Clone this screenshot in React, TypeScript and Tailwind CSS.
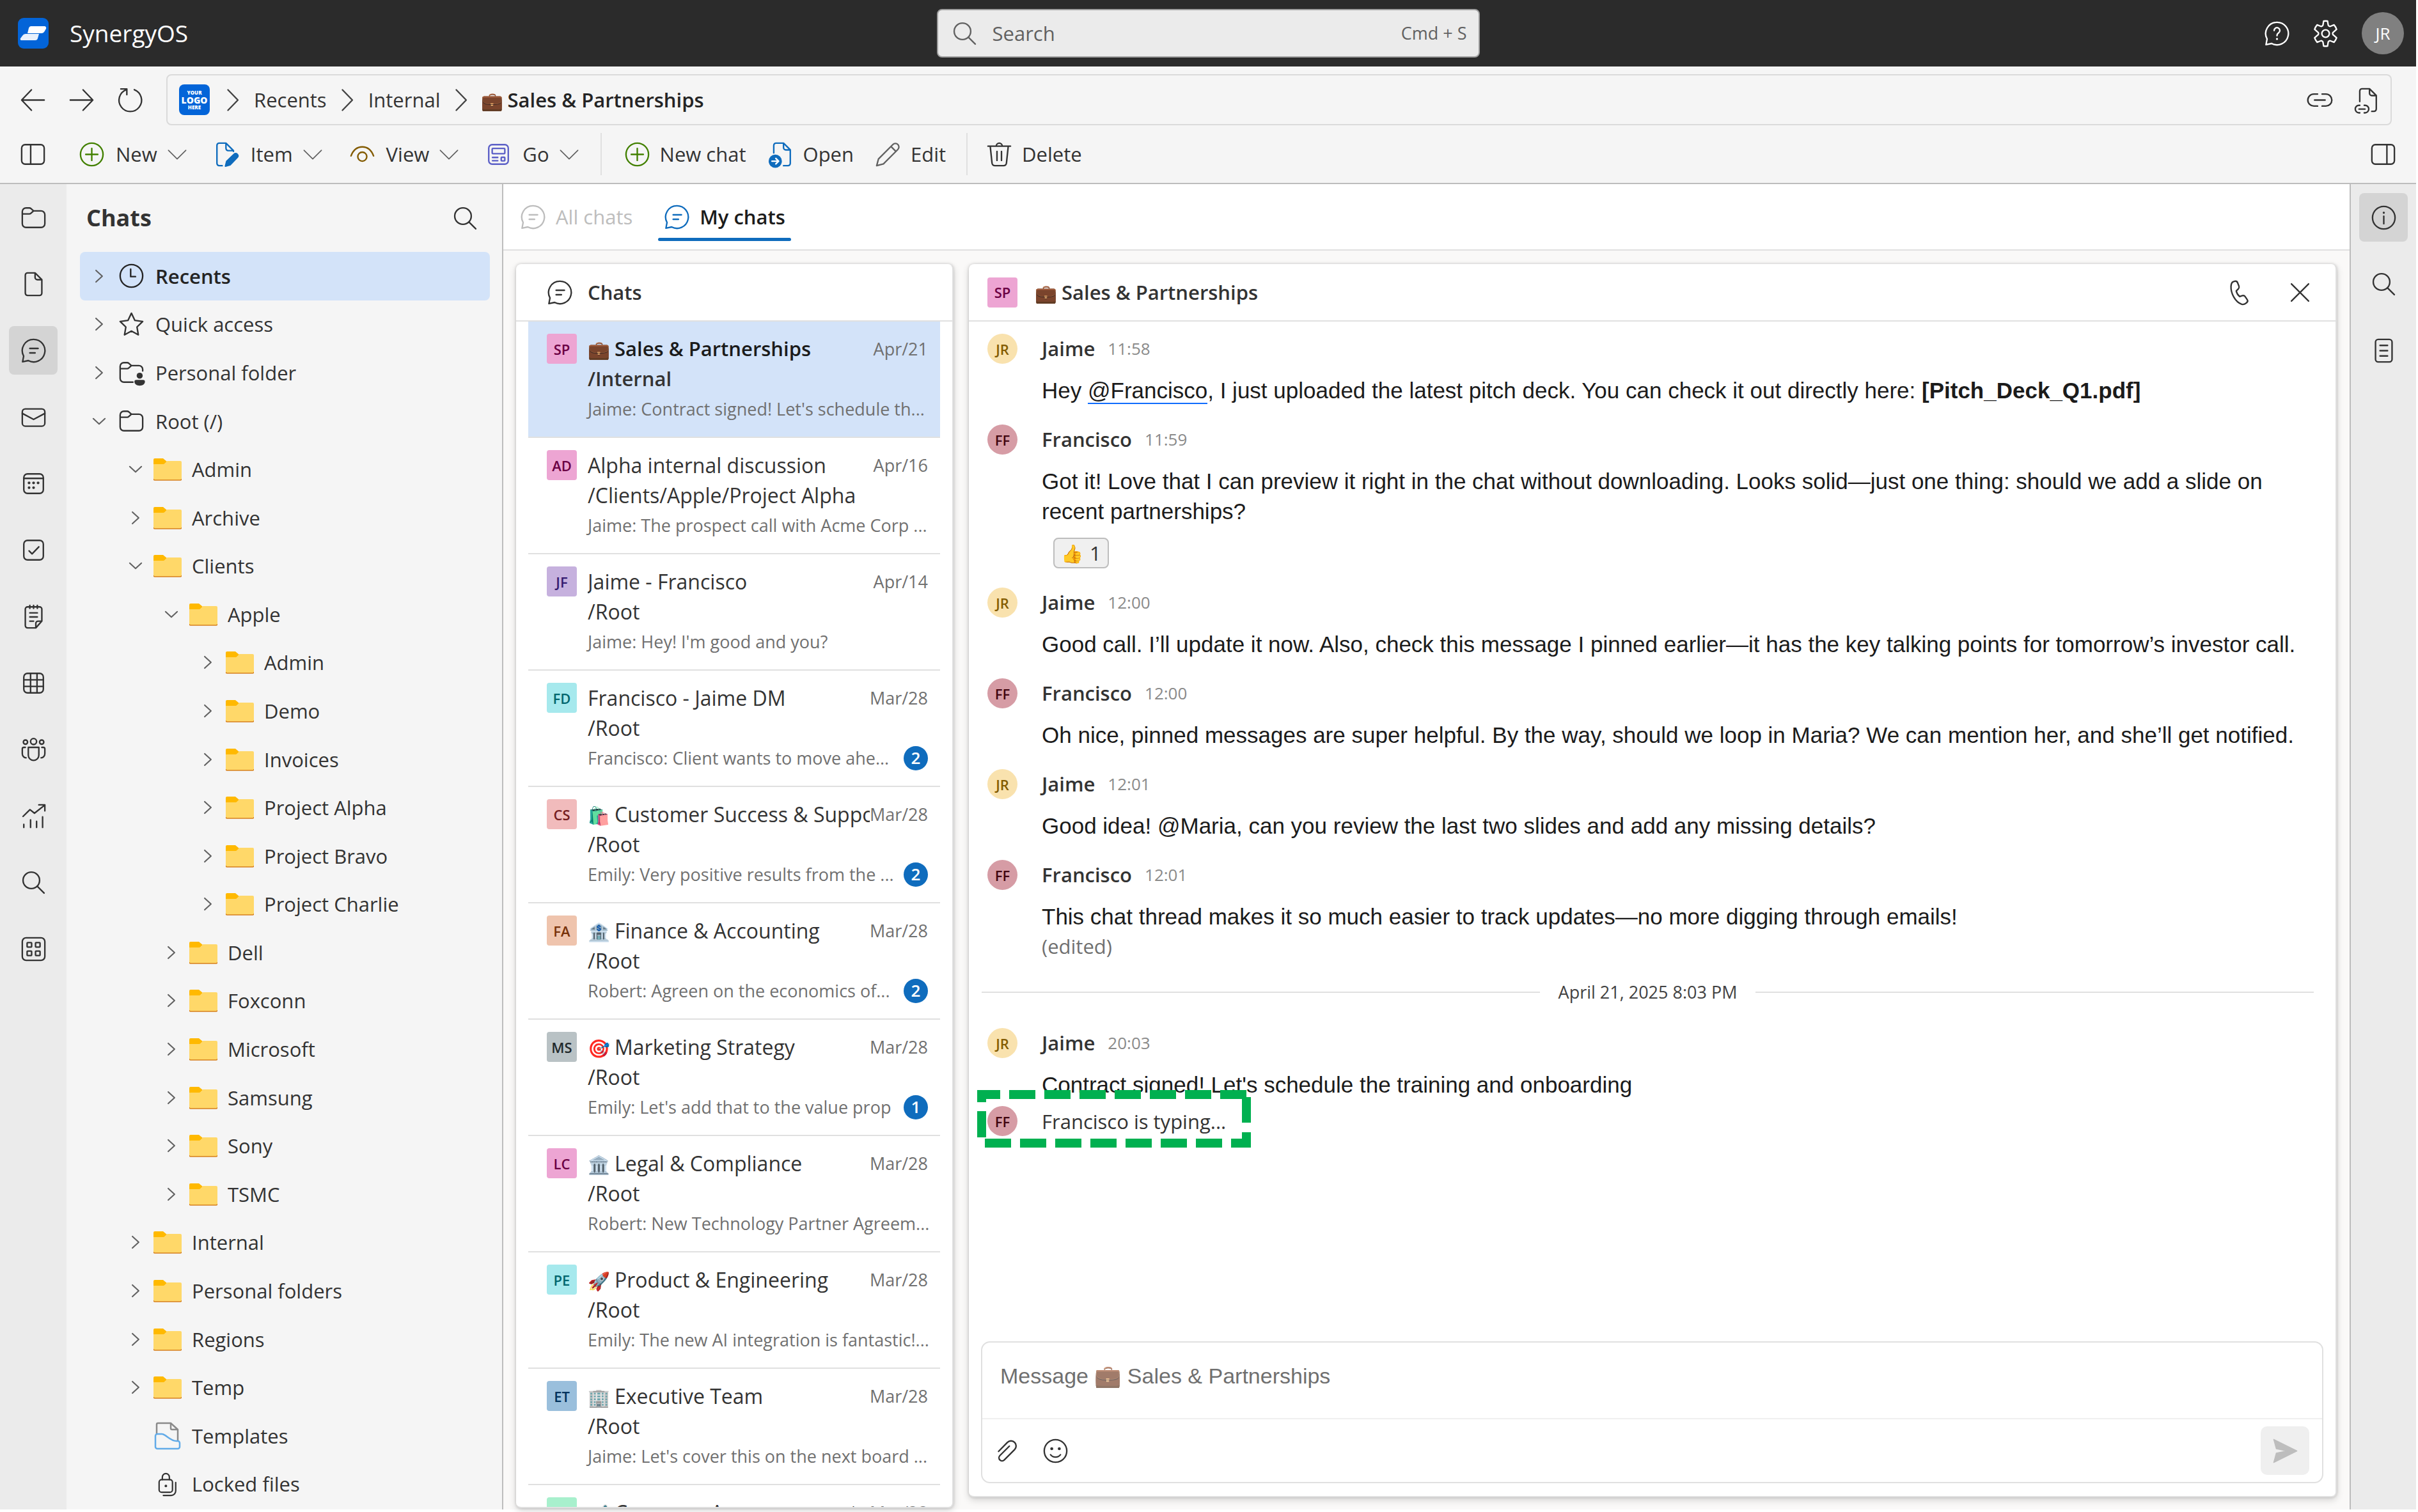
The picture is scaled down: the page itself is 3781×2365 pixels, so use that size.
import React from "react";

type Kids = { children?: React.ReactNode; className?: string };

function Ico({ children, className = "size-[47px]" }: Kids) {
  return (
    <svg
      viewBox="0 0 20 20"
      fill="none"
      stroke="currentColor"
      strokeWidth="1"
      strokeLinecap="round"
      strokeLinejoin="round"
      aria-hidden="true"
      className={`${className} shrink-0`}
    >
      {children}
    </svg>
  );
}

const dot = { fill: "currentColor", stroke: "none" };

const ArrowLeft = () => <Ico><path d="M17.5 10H2.7M9 3.2 2.5 10 9 16.8" /></Ico>;
const ArrowRight = () => <Ico><path d="M2.5 10h14.8M11 3.2 17.5 10 11 16.8" /></Ico>;
const Refresh = () => <Ico><path d="M12.8 3.1A7.5 7.5 0 1 1 7.400 3.1M3.800 2.600H7.800V6.400" /></Ico>;
const PanelLeft = () => <Ico><rect x="2.5" y="3.5" width="15" height="13" rx="2.3" /><path d="M8.5 3.5v13" /></Ico>;
const PanelRight = () => <Ico><rect x="2.5" y="3.5" width="15" height="13" rx="2.3" /><path d="M12.5 3.5v13" /></Ico>;
const AddCircle = () => <Ico className="size-[47px] text-[#428000]"><circle cx="10" cy="10" r="7.5" /><path d="M10 6v8M6 10h8" /></Ico>;
const ChevDown = () => <Ico className="size-[34px] text-[#616161]"><path d="M2 6.5l8 8 8-8" /></Ico>;
const ChevRight = () => <Ico className="size-[47px] text-[#424242]"><path d="M7 3.2 13.6 10 7 16.8" /></Ico>;
const ItemIcon = () => (
  <Ico className="size-[47px] text-[#0f6cbd]">
    <path d="M7 17.500H5A1.500 1.500 0 0 1 3.500 16V4A1.500 1.500 0 0 1 5 2.500h4.500l5 5v.5M9.500 2.500V6A1.500 1.500 0 0 0 11 7.500h3.500" />
    <path d="M9.200 17.800l.8-3.200 5-4.800a1.300 1.300 0 0 1 1.900 0l.2.200a1.300 1.300 0 0 1 0 1.900L12.200 17z" fill="currentColor" />
  </Ico>
);
const EyeIcon = () => <Ico className="size-[47px] text-[#835b00]"><path d="M2.500 11C4 7 6.700 5 10 5s6 2 7.500 6" /><circle cx="10" cy="11.500" r="3" /></Ico>;
const GoIcon = () => (
  <Ico className="size-[47px] text-[#5b5fc7]">
    <rect x="3.500" y="3.500" width="13" height="13" rx="2.300" />
    <rect x="5.800" y="6" width="8.400" height="3.500" rx="0.500" />
    <path d="M6 12h3.500M6 14.200h3.500" />
    <rect x="11.800" y="11.900" width="2.400" height="2.400" rx="0.400" />
  </Ico>
);
const OpenIcon = () => (
  <Ico className="size-[47px] text-[#0f6cbd]">
    <path d="M5.500 9V4A1.500 1.500 0 0 1 7 2.500h5l4.500 4.500v9A1.500 1.500 0 0 1 15 17.500h-3M12 2.500V5.500A1.500 1.500 0 0 0 13.500 7h3" />
    <circle cx="6.500" cy="14.500" r="4.400" {...dot} />
    <path d="M4.300 14.500h4.200M6.900 12.700l1.800 1.800-1.800 1.800" stroke="white" />
  </Ico>
);
const PencilIcon = () => <Ico className="size-[47px] text-[#616161]"><path d="M2.500 17.500l1.200-4.500L13.300 3.400a2.300 2.300 0 0 1 3.300 3.300L7 16.300zM12 4.700 15.300 8" /></Ico>;
const TrashIcon = () => <Ico><path d="M2.500 4.500h15M8 4.500a2 2 0 0 1 4 0M4 4.500l1.200 11.300a2 2 0 0 0 2 1.700h5.600a2 2 0 0 0 2-1.700L16 4.500M8.500 8v6M11.500 8v6" /></Ico>;
const LinkIcon = () => <Ico><path d="M8.500 6H6a4 4 0 0 0 0 8h2.500M11.500 6H14a4 4 0 0 1 0 8h-2.500M6.500 10h7" /></Ico>;
const DocLink = () => (
  <Ico>
    <path d="M5.500 11V4A1.500 1.500 0 0 1 7 2.500h5l4.500 4.500v9A1.500 1.500 0 0 1 15 17.500h-1.500M12 2.500V5.500A1.500 1.500 0 0 0 13.500 7h3" />
    <path d="M5.500 13.500H5a2.500 2.500 0 0 0 0 5h.5M8.500 13.500H9a2.500 2.500 0 0 1 0 5h-.5M5 16h4" />
  </Ico>
);
const SearchIcon = () => <Ico><circle cx="8.500" cy="8.500" r="5.500" /><path d="M12.500 12.500l4.500 4.500" /></Ico>;
const HelpIcon = () => (
  <Ico>
    <path d="M10 2.500a7.500 7.500 0 1 1-3.500 14.100L2.700 17.400 3.400 13.600A7.500 7.500 0 0 1 10 2.500z" />
    <path d="M8.100 8a1.900 1.900 0 1 1 3 1.500c-.7.500-1.100 1-1.100 1.900" />
    <circle cx="10" cy="13.600" r="0.700" {...dot} />
  </Ico>
);
const GearIcon = () => (
  <Ico>
    <path d="M8.700 1.200a8 8 0 0 1 2.600 0l.4 2.400a1.200 1.200 0 0 0 1.700 1l2.200-.9a8.500 8.500 0 0 1 1.700 3l-1.900 1.700a1.200 1.200 0 0 0 0 2.200l1.900 1.700a8.500 8.500 0 0 1-1.700 3l-2.200-.9a1.200 1.200 0 0 0-1.700 1l-.4 2.400a8 8 0 0 1-2.600 0l-.4-2.400a1.200 1.200 0 0 0-1.700-1l-2.200.9a8.500 8.500 0 0 1-1.700-3l1.900-1.700a1.200 1.200 0 0 0 0-2.200L2.700 6.700a8.500 8.500 0 0 1 1.700-3l2.200.9a1.200 1.200 0 0 0 1.700-1z" transform="translate(0 .5)" />
    <circle cx="10" cy="10" r="2.500" />
  </Ico>
);
const ChatIcon = () => <Ico><path d="M10 2.500a7.500 7.500 0 1 1-3.500 14.100L2.700 17.400 3.400 13.600A7.500 7.500 0 0 1 10 2.500zM7.500 8.500h5.500M7.500 11.500h3.500" /></Ico>;
const FolderIcon = () => <Ico><path d="M2.500 6A2.500 2.500 0 0 1 5 3.500h2.200a1.500 1.500 0 0 1 1 .4l1.800 1.600h5A2.500 2.500 0 0 1 17.500 8v6a2.500 2.500 0 0 1-2.500 2.500H5A2.500 2.500 0 0 1 2.500 14zM2.500 7.500h4.700a1.500 1.500 0 0 0 1-.4L10 5.500" /></Ico>;
const PersonFolder = () => (
  <Ico>
    <path d="M11 16.500H5A2.500 2.500 0 0 1 2.500 14V6A2.500 2.500 0 0 1 5 3.500h2.200a1.500 1.500 0 0 1 1 .4l1.800 1.600h5A2.500 2.500 0 0 1 17.500 8v1M2.500 7.500h4.700a1.500 1.500 0 0 0 1-.4L10 5.500" />
    <circle cx="15.500" cy="12.200" r="2" {...dot} />
    <path d="M12 16.200a1.200 1.200 0 0 1 1.200-1.200h4.600a1.200 1.200 0 0 1 1.200 1.200c0 1.600-1.500 2.600-3.500 2.600s-3.500-1-3.500-2.600z" {...dot} />
  </Ico>
);
const DocIcon = () => <Ico><path d="M4.500 4A1.500 1.500 0 0 1 6 2.500h5L15.500 7v9A1.500 1.500 0 0 1 14 17.500H6A1.500 1.500 0 0 1 4.500 16zM11 2.500V5.500A1.500 1.500 0 0 0 12.500 7h3" /></Ico>;
const MailIcon = () => <Ico><rect x="2.500" y="4.500" width="15" height="11.500" rx="2" /><path d="M2.500 7.500 10 11.500l7.500-4" /></Ico>;
const CalendarIcon = () => (
  <Ico>
    <rect x="3.500" y="3.500" width="13" height="13" rx="2.500" />
    <path d="M3.500 6.500h13" />
    {[[7, 9.500], [10, 9.500], [13, 9.500], [7, 12.700], [10, 12.700]].map(([x, y]) => <circle key={`${x}-${y}`} cx={x} cy={y} r="0.900" {...dot} />)}
  </Ico>
);
const TaskIcon = () => <Ico><rect x="3.500" y="3.500" width="13" height="13" rx="2.500" /><path d="M7 10.500l2 2 4.500-4.700" /></Ico>;
const NoteIcon = () => <Ico><path d="M4.500 5A1.500 1.500 0 0 1 6 3.500h8A1.500 1.500 0 0 1 15.500 5v8L11.500 17.500H6A1.500 1.500 0 0 1 4.500 16zM15.500 13H13a1.500 1.500 0 0 0-1.500 1.500v3M7.500 2.500v2M10 2.500v2M12.500 2.500v2M7.500 7.500h5M7.500 10.200h5M7.500 13h2.500" /></Ico>;
const GridIcon = () => <Ico><rect x="3.500" y="3.500" width="13" height="13" rx="2.500" /><path d="M8 3.500v13M12.300 3.500v13M3.500 7.800h13M3.500 12.200h13" /></Ico>;
const PeopleIcon = () => <Ico><circle cx="10" cy="4.600" r="2" /><circle cx="4.600" cy="5" r="1.400" /><circle cx="15.400" cy="5" r="1.400" /><path d="M6.500 8.500h7v5.200a3.500 3.500 0 0 1-7 0zM4.500 8.500h-1a1 1 0 0 0-1 1v3.300A2.700 2.700 0 0 0 5 15.500M15.500 8.500h1a1 1 0 0 1 1 1v3.300A2.700 2.700 0 0 1 15 15.500" /></Ico>;
const ChartIcon = () => <Ico><path d="M3 10.200 7.600 5.700l3 2.400L17 3M13.500 2.500h4v4M3.500 15.500v2M8 12.500v5M12 13.500v4M16 10.500v7" /></Ico>;
const AppsIcon = () => (
  <Ico>
    <rect x="2.500" y="2.500" width="15" height="15" rx="2.500" />
    {[[5.700, 5.700], [11.300, 5.700], [5.700, 11.300], [11.300, 11.300]].map(([x, y]) => <rect key={`${x}-${y}`} x={x} y={y} width="3" height="3" rx="0.400" />)}
  </Ico>
);
const InfoIcon = () => <Ico><circle cx="10" cy="10" r="7.500" /><path d="M10 9v5" /><circle cx="10" cy="6.700" r="0.700" {...dot} /></Ico>;
const DocLines = () => <Ico><rect x="4.500" y="2.500" width="11" height="15" rx="1.800" /><path d="M7.500 6.500h5M7.500 10h5M7.500 13.500h5" /></Ico>;
const PhoneIcon = () => <Ico><path d="M5.800 2.900 7 2.500c.9-.2 1.600.2 1.900 1l.9 2.300c.2.700 0 1.400-.4 1.800L8 9c.3 1.400 1.100 2.700 2.300 3.700l1.800-.6c.7-.2 1.400 0 1.800.6l1.300 1.900c.5.700.4 1.600-.2 2.100l-.6.500c-.8.700-1.800.9-2.800.6-4.300-1.400-7.300-7.300-7.100-11.900.1-1.300.4-2.600 1.300-3z" /></Ico>;
const CloseIcon = () => <Ico><path d="M4.300 4.300l11.400 11.400M15.700 4.300 4.300 15.700" /></Ico>;
const ClockIcon = () => <Ico><circle cx="10" cy="10" r="7.500" /><path d="M9.500 5.500v5h3.200" /></Ico>;
const StarIcon = () => <Ico><path d="M10 2.500l2.300 4.800 5.200.7-3.800 3.700.9 5.200L10 14.400l-4.600 2.500.9-5.200L2.500 8l5.200-.7z" /></Ico>;
const Paperclip = () => <Ico><path d="M3 10.300 8.900 4.300a3.300 3.300 0 0 1 4.800 4.800l-6.900 6.900a2 2 0 0 1-2.900-2.900l6.300-6.300" transform="translate(1 0)" /></Ico>;
const SmileyIcon = () => <Ico><circle cx="10" cy="10" r="7.500" /><path d="M6.700 12.500a4.200 4.200 0 0 0 6.600 0" /><circle cx="7.500" cy="8.500" r="1" {...dot} /><circle cx="12.500" cy="8.500" r="1" {...dot} /></Ico>;
const SendIcon = () => <Ico className="size-[47px] text-[#bdbdbd]"><path d="M2.300 2.300 17.700 10 2.300 17.700 4 11.500 11 10 4 8.500z" fill="currentColor" strokeWidth="0.600" /></Ico>;

function YellowFolder() {
  return (
    <svg viewBox="0 0 44 36" aria-hidden="true" className="h-[36px] w-[44px] shrink-0">
      <path d="M0 3a2 2 0 0 1 2-2h13l6 5-5 5H0z" fill="#ffb900" />
      <path d="M0 10h14c2 0 3-.6 4-1.600l3.400-3.400H42a2 2 0 0 1 2 2v26a2 2 0 0 1-2 2H2a2 2 0 0 1-2-2z" fill="#ffd869" />
      <path d="M0 33a2 2 0 0 0 2 2h40a2 2 0 0 0 2-2" fill="none" stroke="#d67f1c" strokeWidth="1.500" />
    </svg>
  );
}
function TemplateIcon() {
  return (
    <svg viewBox="0 0 44 44" fill="none" strokeWidth="2.500" strokeLinejoin="round" aria-hidden="true" className="size-[44px] shrink-0">
      <path d="M5 20V4a2 2 0 0 1 2-2h20l11 10v18M27 2v8a2 2 0 0 0 2 2h9" stroke="#8a8a8a" />
      <path d="M3 22a3 3 0 0 1 3-3h7c6 0 13 11 23 11h2a3 3 0 0 1 3 3v6a3 3 0 0 1-3 3H6a3 3 0 0 1-3-3z" stroke="#62abe8" />
    </svg>
  );
}
const LockIcon = () => <Ico className="size-[44px]"><rect x="4" y="7" width="9.500" height="9" rx="1.800" /><path d="M6.300 7V5.200a2.500 2.500 0 0 1 5 0V7M15.800 9v6a3.200 3.200 0 0 1-3.200 3.200H7" /><circle cx="8.800" cy="11.500" r="0.900" {...dot} /></Ico>;

type Node = { label: string; level: number; open?: boolean; leaf?: boolean; icon?: () => React.JSX.Element; active?: boolean };

const tree: Node[] = [
  { label: "Recents", level: 0, icon: ClockIcon, active: true },
  { label: "Quick access", level: 0, icon: StarIcon },
  { label: "Personal folder", level: 0, icon: PersonFolder },
  { label: "Root (/)", level: 0, icon: FolderIcon, open: true },
  { label: "Admin", level: 1, open: true },
  { label: "Archive", level: 1 },
  { label: "Clients", level: 1, open: true },
  { label: "Apple", level: 2, open: true },
  { label: "Admin", level: 3 },
  { label: "Demo", level: 3 },
  { label: "Invoices", level: 3 },
  { label: "Project Alpha", level: 3 },
  { label: "Project Bravo", level: 3 },
  { label: "Project Charlie", level: 3 },
  { label: "Dell", level: 2 },
  { label: "Foxconn", level: 2 },
  { label: "Microsoft", level: 2 },
  { label: "Samsung", level: 2 },
  { label: "Sony", level: 2 },
  { label: "TSMC", level: 2 },
  { label: "Internal", level: 1 },
  { label: "Personal folders", level: 1 },
  { label: "Regions", level: 1 },
  { label: "Temp", level: 1 },
  { label: "Templates", level: 1, leaf: true, icon: TemplateIcon },
  { label: "Locked files", level: 1, leaf: true, icon: LockIcon },
];

const indents = ["pl-[16px]", "pl-[73px]", "pl-[129px]", "pl-[186px]"];

function TreeRow({ node }: { node: Node }) {
  const Icon = node.icon ?? YellowFolder;
  return (
    <li className="flex min-h-0 flex-1">
      <button
        className={`flex w-full items-center rounded-[8px] text-left ${indents[node.level]} ${node.active ? "bg-[#d3e3f9] font-semibold text-[#242424]" : ""}`}
      >
        <span className="flex w-[28px] justify-center text-[#616161]">
          {!node.leaf && (
            <Ico className="size-[28px]">
              <path strokeWidth="1.500" d={node.open ? "M3.500 7l6.500 6 6.500-6" : "M6.500 3.500 13.500 10l-7 6.500"} />
            </Ico>
          )}
        </span>
        <span className="ml-[12px] flex w-[48px] justify-center">
          <Icon />
        </span>
        <span className="ml-[14px] truncate">{node.label}</span>
      </button>
    </li>
  );
}

type Chat = { code: string; tone: string; emoji?: string; title: string; path: string; text: string; date: string; unread?: number; active?: boolean };

const pink = "bg-[#eda5d3] text-[#6b0043]";
const cyan = "bg-[#a6e9ed] text-[#00666d]";
const chats: Chat[] = [
  { code: "SP", tone: pink, emoji: "💼", title: "Sales & Partnerships", path: "/Internal", text: "Jaime: Contract signed! Let's schedule th...", date: "Apr/21", active: true },
  { code: "AD", tone: pink, title: "Alpha internal discussion", path: "/Clients/Apple/Project Alpha", text: "Jaime: The prospect call with Acme Corp ...", date: "Apr/16" },
  { code: "JF", tone: "bg-[#c6b1de] text-[#341a6f]", title: "Jaime - Francisco", path: "/Root", text: "Jaime: Hey! I'm good and you?", date: "Apr/14" },
  { code: "FD", tone: cyan, title: "Francisco - Jaime DM", path: "/Root", text: "Francisco: Client wants to move ahe...", date: "Mar/28", unread: 2 },
  { code: "CS", tone: "bg-[#f1bbbc] text-[#751d1f]", emoji: "🛍️", title: "Customer Success & Support", path: "/Root", text: "Emily: Very positive results from the ...", date: "Mar/28", unread: 2 },
  { code: "FA", tone: "bg-[#efc4ad] text-[#77320a]", emoji: "🏦", title: "Finance & Accounting", path: "/Root", text: "Robert: Agreen on the economics of...", date: "Mar/28", unread: 2 },
  { code: "MS", tone: "bg-[#b9c2c5] text-[#22292c]", emoji: "🎯", title: "Marketing Strategy", path: "/Root", text: "Emily: Let's add that to the value prop", date: "Mar/28", unread: 1 },
  { code: "LC", tone: pink, emoji: "🏛️", title: "Legal & Compliance", path: "/Root", text: "Robert: New Technology Partner Agreem...", date: "Mar/28" },
  { code: "PE", tone: cyan, emoji: "🚀", title: "Product & Engineering", path: "/Root", text: "Emily: The new AI integration is fantastic!...", date: "Mar/28" },
  { code: "ET", tone: "bg-[#9abfdc] text-[#00325c]", emoji: "🏢", title: "Executive Team", path: "/Root", text: "Jaime: Let's cover this on the next board ...", date: "Mar/28" },
  { code: "CA", tone: "bg-[#a8f0cd] text-[#0f5132]", emoji: "📢", title: "Company Announcements", path: "/Root", text: "", date: "Mar/28" },
];

function Emoji({ children }: Kids) {
  return <span className="mr-[8px] inline-block w-[34px] text-[28px] leading-none">{children}</span>;
}

function ChatRow({ chat }: { chat: Chat }) {
  return (
    <li className="h-[182px] shrink-0 border-b-2 border-[#e0e0e0]">
      <button className={`flex size-full items-start gap-[17px] pt-[19px] pr-[19px] pl-[29px] text-left ${chat.active ? "bg-[#d3e3f9]" : ""}`}>
        <span className={`flex size-[47px] shrink-0 items-center justify-center rounded-[4px] text-[22px] font-semibold ${chat.tone}`}>{chat.code}</span>
        <span className={`flex min-w-0 flex-1 flex-col leading-[47px] ${chat.active ? "text-[31px]" : "text-[32px]"}`}>
          <span className="flex">
            <span className={`min-w-0 flex-1 overflow-hidden whitespace-nowrap ${chat.active ? "font-semibold text-[#1b1b1b]" : ""}`}>
              {chat.emoji && <Emoji>{chat.emoji}</Emoji>}
              {chat.title}
            </span>
            <span className="text-[27px] text-[#707070]">{chat.date}</span>
          </span>
          <span className={chat.active ? "font-semibold" : ""}>{chat.path}</span>
          <span className="flex items-center text-[27px] text-[#707070]">
            <span className="min-w-0 flex-1 whitespace-nowrap">{chat.text}</span>
            {chat.unread && (
              <span className="flex size-[38px] items-center justify-center rounded-full bg-[#0f6cbd] text-[26px] font-semibold text-white">{chat.unread}</span>
            )}
          </span>
        </span>
      </button>
    </li>
  );
}

const people = {
  Jaime: { code: "JR", tone: "bg-[#f9e2ae] text-[#835b00]" },
  Francisco: { code: "FF", tone: "bg-[#d69ca5] text-[#420610]" },
};

function Avatar({ name }: { name: keyof typeof people }) {
  const p = people[name];
  return <span className={`flex size-[47px] shrink-0 items-center justify-center rounded-full text-[22px] font-semibold ${p.tone}`}>{p.code}</span>;
}

function Message({ name, time, children, extra }: { name: keyof typeof people; time: string; children: React.ReactNode; extra?: React.ReactNode }) {
  return (
    <article className="flex gap-[38px]">
      <Avatar name={name} />
      <div className="min-w-0 flex-1">
        <header className="flex items-center gap-[20px] leading-[47px]">
          <span className="font-semibold">{name}</span>
          <time className="text-[26px] text-[#8a8a8a]">{time}</time>
        </header>
        <p className="mt-[18px] font-['Liberation_Sans',sans-serif] text-[35px] leading-[47px] text-[#1b1b1b]">{children}</p>
        {extra}
      </div>
    </article>
  );
}

function ToolButton({ icon, label, menu }: { icon: React.ReactNode; label: string; menu?: boolean }) {
  return (
    <button className={`flex items-center ${menu ? "gap-[14px]" : "gap-[12px]"}`}>
      {icon}
      <span>{label}</span>
      {menu && <ChevDown />}
    </button>
  );
}

function RailButton({ label, active, children }: Kids & { label: string; active?: boolean }) {
  return (
    <button aria-label={label} className={`flex size-[76px] items-center justify-center rounded-[8px] ${active ? "bg-[#d4d4d4]" : ""}`}>
      {children}
    </button>
  );
}

const rail: [string, () => React.JSX.Element][] = [
  ["Folders", FolderIcon],
  ["Files", DocIcon],
  ["Chats", ChatIcon],
  ["Mail", MailIcon],
  ["Calendar", CalendarIcon],
  ["Tasks", TaskIcon],
  ["Notes", NoteIcon],
  ["Tables", GridIcon],
  ["Contacts", PeopleIcon],
  ["Reports", ChartIcon],
  ["Search", SearchIcon],
  ["Apps", AppsIcon],
];

function Highlight() {
  return (
    <svg viewBox="0 0 428 90" fill="none" stroke="#00b050" strokeWidth="14" aria-hidden="true" className="absolute -top-[25px] -left-[16px] h-[90px] w-[428px]">
      <path d="M7 19V7H36M380 7H421M421 11V51M421 66V83H397M7 74V33" />
      <path d="M50 7H366" strokeDasharray="41 14" />
      <path d="M12 83H383" strokeDasharray="41 14" />
    </svg>
  );
}

const panel = "flex flex-col overflow-hidden rounded-[8px] border-r-2 border-b-2 border-[#e0e0e0] bg-white shadow-[0_4px_12px_rgba(0,0,0,0.16),0_0_4px_rgba(0,0,0,0.18)]";

export default function App() {
  return (
    <div className="flex h-screen flex-col overflow-hidden bg-white pr-[3px] pb-[4px] font-['Open_Sans',sans-serif] text-[31px] leading-[44px] text-[#333333]">
      <header className="grid h-[104px] shrink-0 grid-cols-[1fr_auto_1fr] items-center bg-[#2b2b2b] text-white">
        <div className="flex items-center gap-[33px] pl-[28px]">
          <svg viewBox="0 0 48 48" aria-hidden="true" className="size-[48px]">
            <rect width="48" height="48" rx="9" fill="#0364d8" />
            <path d="M20 13h22a3 3 0 0 1 2 4l-3 5a5 5 0 0 1-4 2H15l2-8a4 4 0 0 1 3-3z" fill="#fff" />
            <path d="M12 25h21l-2 7a4 4 0 0 1-4 3H6a2 2 0 0 1-2-3l3-4a6 6 0 0 1 5-3z" fill="#e8f1fc" />
          </svg>
          <span className="text-[37px]">SynergyOS</span>
        </div>
        <label className="flex h-[76px] w-[849px] items-center gap-[20px] rounded-[8px] border-2 border-[#a0a0a0] bg-[#ebebeb] px-[18px] text-[#616161]">
          <SearchIcon />
          <input aria-label="Search" placeholder="Search" className="min-w-0 flex-1 bg-transparent outline-none placeholder:text-[#616161]" />
          <kbd className="font-['Open_Sans',sans-serif] text-[27px]">Cmd + S</kbd>
        </label>
        <div className="flex items-center justify-end gap-[29px] pr-[19px]">
          <button aria-label="Help"><HelpIcon /></button>
          <button aria-label="Settings"><GearIcon /></button>
          <button className="ml-[4px] flex size-[66px] items-center justify-center rounded-full bg-[#808080] text-[26px]">JR</button>
        </div>
      </header>

      <nav aria-label="Address" className="flex h-[104px] shrink-0 items-center gap-[29px] bg-[#f5f5f5] pr-[38px] pl-[28px] text-[#333333]">
        <button aria-label="Back"><ArrowLeft /></button>
        <button aria-label="Forward"><ArrowRight /></button>
        <button aria-label="Refresh"><Refresh /></button>
        <div className="ml-[4px] flex h-[80px] flex-1 items-center rounded-[8px] border-2 border-[#dadada] pr-[14px] pl-[18px]">
          <span className="mr-[12px] flex size-[48px] flex-col items-center justify-center rounded-[8px] bg-[#0364d8] text-[8px] leading-[10px] font-extrabold text-white">
            <span>YOUR</span>
            <span className="text-[14px] leading-[13px]">LOGO</span>
            <span>HERE</span>
          </span>
          <ChevRight />
          <a href="#recents" className="mr-[8px] ml-[10px]">Recents</a>
          <ChevRight />
          <a href="#internal" className="mr-[8px] ml-[10px]">Internal</a>
          <ChevRight />
          <a href="#sales" className="ml-[8px] font-semibold text-[#242424]"><Emoji>💼</Emoji>Sales &amp; Partnerships</a>
          <span className="flex-1" />
          <button aria-label="Copy link" className="mr-[26px]"><LinkIcon /></button>
          <button aria-label="Copy file link"><DocLink /></button>
        </div>
      </nav>

      <div role="toolbar" className="flex h-[80px] shrink-0 items-center gap-[32px] border-b-2 border-[#bdbdbd] bg-[#f5f5f5] px-[28px] pb-[12px]">
        <div className="flex items-center gap-[37px]">
          <button aria-label="Toggle left panel" className="mr-[8px]"><PanelLeft /></button>
          <ToolButton icon={<AddCircle />} label="New" menu />
          <ToolButton icon={<ItemIcon />} label="Item" menu />
          <ToolButton icon={<EyeIcon />} label="View" menu />
          <ToolButton icon={<GoIcon />} label="Go" menu />
        </div>
        <span className="h-[66px] w-[2px] bg-[#e0e0e0]" />
        <div className="flex items-center gap-[30px]">
          <ToolButton icon={<AddCircle />} label="New chat" />
          <ToolButton icon={<OpenIcon />} label="Open" />
          <ToolButton icon={<PencilIcon />} label="Edit" />
        </div>
        <span className="h-[66px] w-[2px] bg-[#e0e0e0]" />
        <div className="-ml-[6px] flex items-center">
          <ToolButton icon={<TrashIcon />} label="Delete" />
        </div>
        <span className="flex-1" />
        <button aria-label="Toggle right panel"><PanelRight /></button>
      </div>

      <div className="flex min-h-0 flex-1">
        <nav aria-label="Apps" className="flex w-[104px] shrink-0 flex-col items-center gap-[28px] bg-[#ebebeb] pt-[14px]">
          {rail.map(([label, Icon]) => (
            <RailButton key={label} label={label} active={label === "Chats"}><Icon /></RailButton>
          ))}
        </nav>

        <aside className="flex w-[683px] shrink-0 flex-col border-r-2 border-[#bdbdbd] bg-[#f5f5f5] pr-[19px] pb-[2px] pl-[21px]">
          <div className="flex h-[106px] shrink-0 items-center justify-between pr-[15px] pl-[10px]">
            <h2 className="text-[36px] font-bold">Chats</h2>
            <button aria-label="Search folders"><SearchIcon /></button>
          </div>
          <ul className="flex min-h-0 flex-1 flex-col">
            {tree.map((node, i) => <TreeRow key={i} node={node} />)}
          </ul>
        </aside>

        <main className="flex min-w-0 flex-1 flex-col bg-[#faf9f8]">
          <div role="tablist" className="flex h-[104px] shrink-0 items-center gap-[40px] border-b-2 border-[#e0e0e0] bg-white px-[23px]">
            <button role="tab" aria-selected="false" className="flex items-center gap-[12px] text-[#bdbdbd]"><ChatIcon />All chats</button>
            <button role="tab" aria-selected="true" className="mt-[14px] flex flex-col px-[6px] text-[#1b1b1b]">
              <span className="flex items-center gap-[12px] pr-[3px] pb-[9px] font-semibold"><span className="text-[#0f6cbd]"><ChatIcon /></span>My chats</span>
              <span className="-mx-[6px] h-[5px] self-stretch rounded-full bg-[#0f6cbd]" />
            </button>
          </div>
          <div className="flex min-h-0 flex-1 gap-[24px] px-[20px] pt-[21px]">
            <section className={`mb-[2px] w-[684px] shrink-0 ${panel}`}>
              <h3 className="flex h-[90px] shrink-0 items-center gap-[20px] border-b-2 border-[#e0e0e0] pl-[45px] font-semibold"><ChatIcon />Chats</h3>
              <ul className="mx-[19px] flex min-h-0 flex-1 flex-col overflow-hidden">
                {chats.map((c) => <ChatRow key={c.code} chat={c} />)}
              </ul>
            </section>

            <section className={`mb-[19px] min-w-0 flex-1 ${panel}`}>
              <header className="flex h-[90px] shrink-0 items-center border-b-2 border-[#e0e0e0] pr-[32px] pl-[29px]">
                <span className={`mr-[27px] flex size-[47px] items-center justify-center rounded-[4px] text-[22px] font-semibold ${pink}`}>SP</span>
                <h3 className="flex-1 font-semibold"><Emoji>💼</Emoji>Sales &amp; Partnerships</h3>
                <button aria-label="Call" className="mr-[48px]"><PhoneIcon /></button>
                <button aria-label="Close"><CloseIcon /></button>
              </header>

              <div className="flex min-h-0 flex-1 flex-col gap-[30px] overflow-hidden pt-[19px] pr-[34px] pl-[29px]">
                <Message name="Jaime" time="11:58">
                  Hey <a href="#francisco" className="border-b-2 border-[#0f6cfd] leading-none">@Francisco</a>, I just uploaded the latest pitch deck. You can check it out directly here: <b>[Pitch_Deck_Q1.pdf]</b>
                </Message>
                <Message
                  name="Francisco"
                  time="11:59"
                  extra={
                    <button className="mt-[18px] ml-[18px] flex h-[48px] items-center gap-[10px] rounded-[8px] border-2 border-[#bdbdbd] bg-[#f0f0f0] px-[10px]">
                      <span className="text-[28px] leading-none">👍</span>1
                    </button>
                  }
                >
                  Got it! Love that I can preview it right in the chat without downloading. Looks solid—just one thing: should we add a slide on recent partnerships?
                </Message>
                <Message name="Jaime" time="12:00">Good call. I’ll update it now. Also, check this message I pinned earlier—it has the key talking points for tomorrow’s investor call.</Message>
                <Message name="Francisco" time="12:00">Oh nice, pinned messages are super helpful. By the way, should we loop in Maria? We can mention her, and she’ll get notified.</Message>
                <Message name="Jaime" time="12:01">Good idea! @Maria, can you review the last two slides and add any missing details?</Message>
                <Message name="Francisco" time="12:01" extra={<p className="leading-[47px] text-[#707070]">(edited)</p>}>
                  This chat thread makes it so much easier to track updates—no more digging through emails!
                </Message>
                <div className="-ml-[9px] mb-[8px] flex items-center gap-[29px] text-[27px] leading-[36px] text-[#424242]">
                  <span className="h-[2px] flex-1 bg-[#e0e0e0]" />
                  April 21, 2025 8:03 PM
                  <span className="h-[2px] flex-1 bg-[#e0e0e0]" />
                </div>
                <Message name="Jaime" time="20:03">Contract signed! Let&apos;s schedule the training and onboarding</Message>
                <div className="relative -mt-[20px] flex items-center gap-[38px]">
                  <Avatar name="Francisco" />
                  <span>Francisco is typing...</span>
                  <Highlight />
                </div>
              </div>

              <form className="mx-[19px] mb-[20px] flex h-[222px] shrink-0 flex-col rounded-[14px] border-2 border-[#e0e0e0]">
                <textarea
                  aria-label="Message"
                  placeholder="Message 💼 Sales & Partnerships"
                  className="min-h-0 flex-1 resize-none px-[28px] py-[29px] font-['Liberation_Sans',sans-serif] text-[34px] leading-[47px] outline-none placeholder:text-[#333333] placeholder:opacity-70"
                />
                <div className="flex h-[100px] items-center border-t-2 border-[#f0f0f0] pr-[20px] pl-[16px]">
                  <button type="button" aria-label="Attach file" className="mr-[28px]"><Paperclip /></button>
                  <button type="button" aria-label="Insert emoji"><SmileyIcon /></button>
                  <span className="flex-1" />
                  <button aria-label="Send" className="flex size-[76px] items-center justify-center rounded-[10px] bg-[#efefef]"><SendIcon /></button>
                </div>
              </form>
            </section>
          </div>
        </main>

        <nav aria-label="Details" className="flex w-[104px] shrink-0 flex-col items-center gap-[28px] border-l-2 border-[#bdbdbd] bg-[#ebebeb] pt-[14px]">
          <RailButton label="Info" active><InfoIcon /></RailButton>
          <RailButton label="Search"><SearchIcon /></RailButton>
          <RailButton label="Document"><DocLines /></RailButton>
        </nav>
      </div>
    </div>
  );
}
